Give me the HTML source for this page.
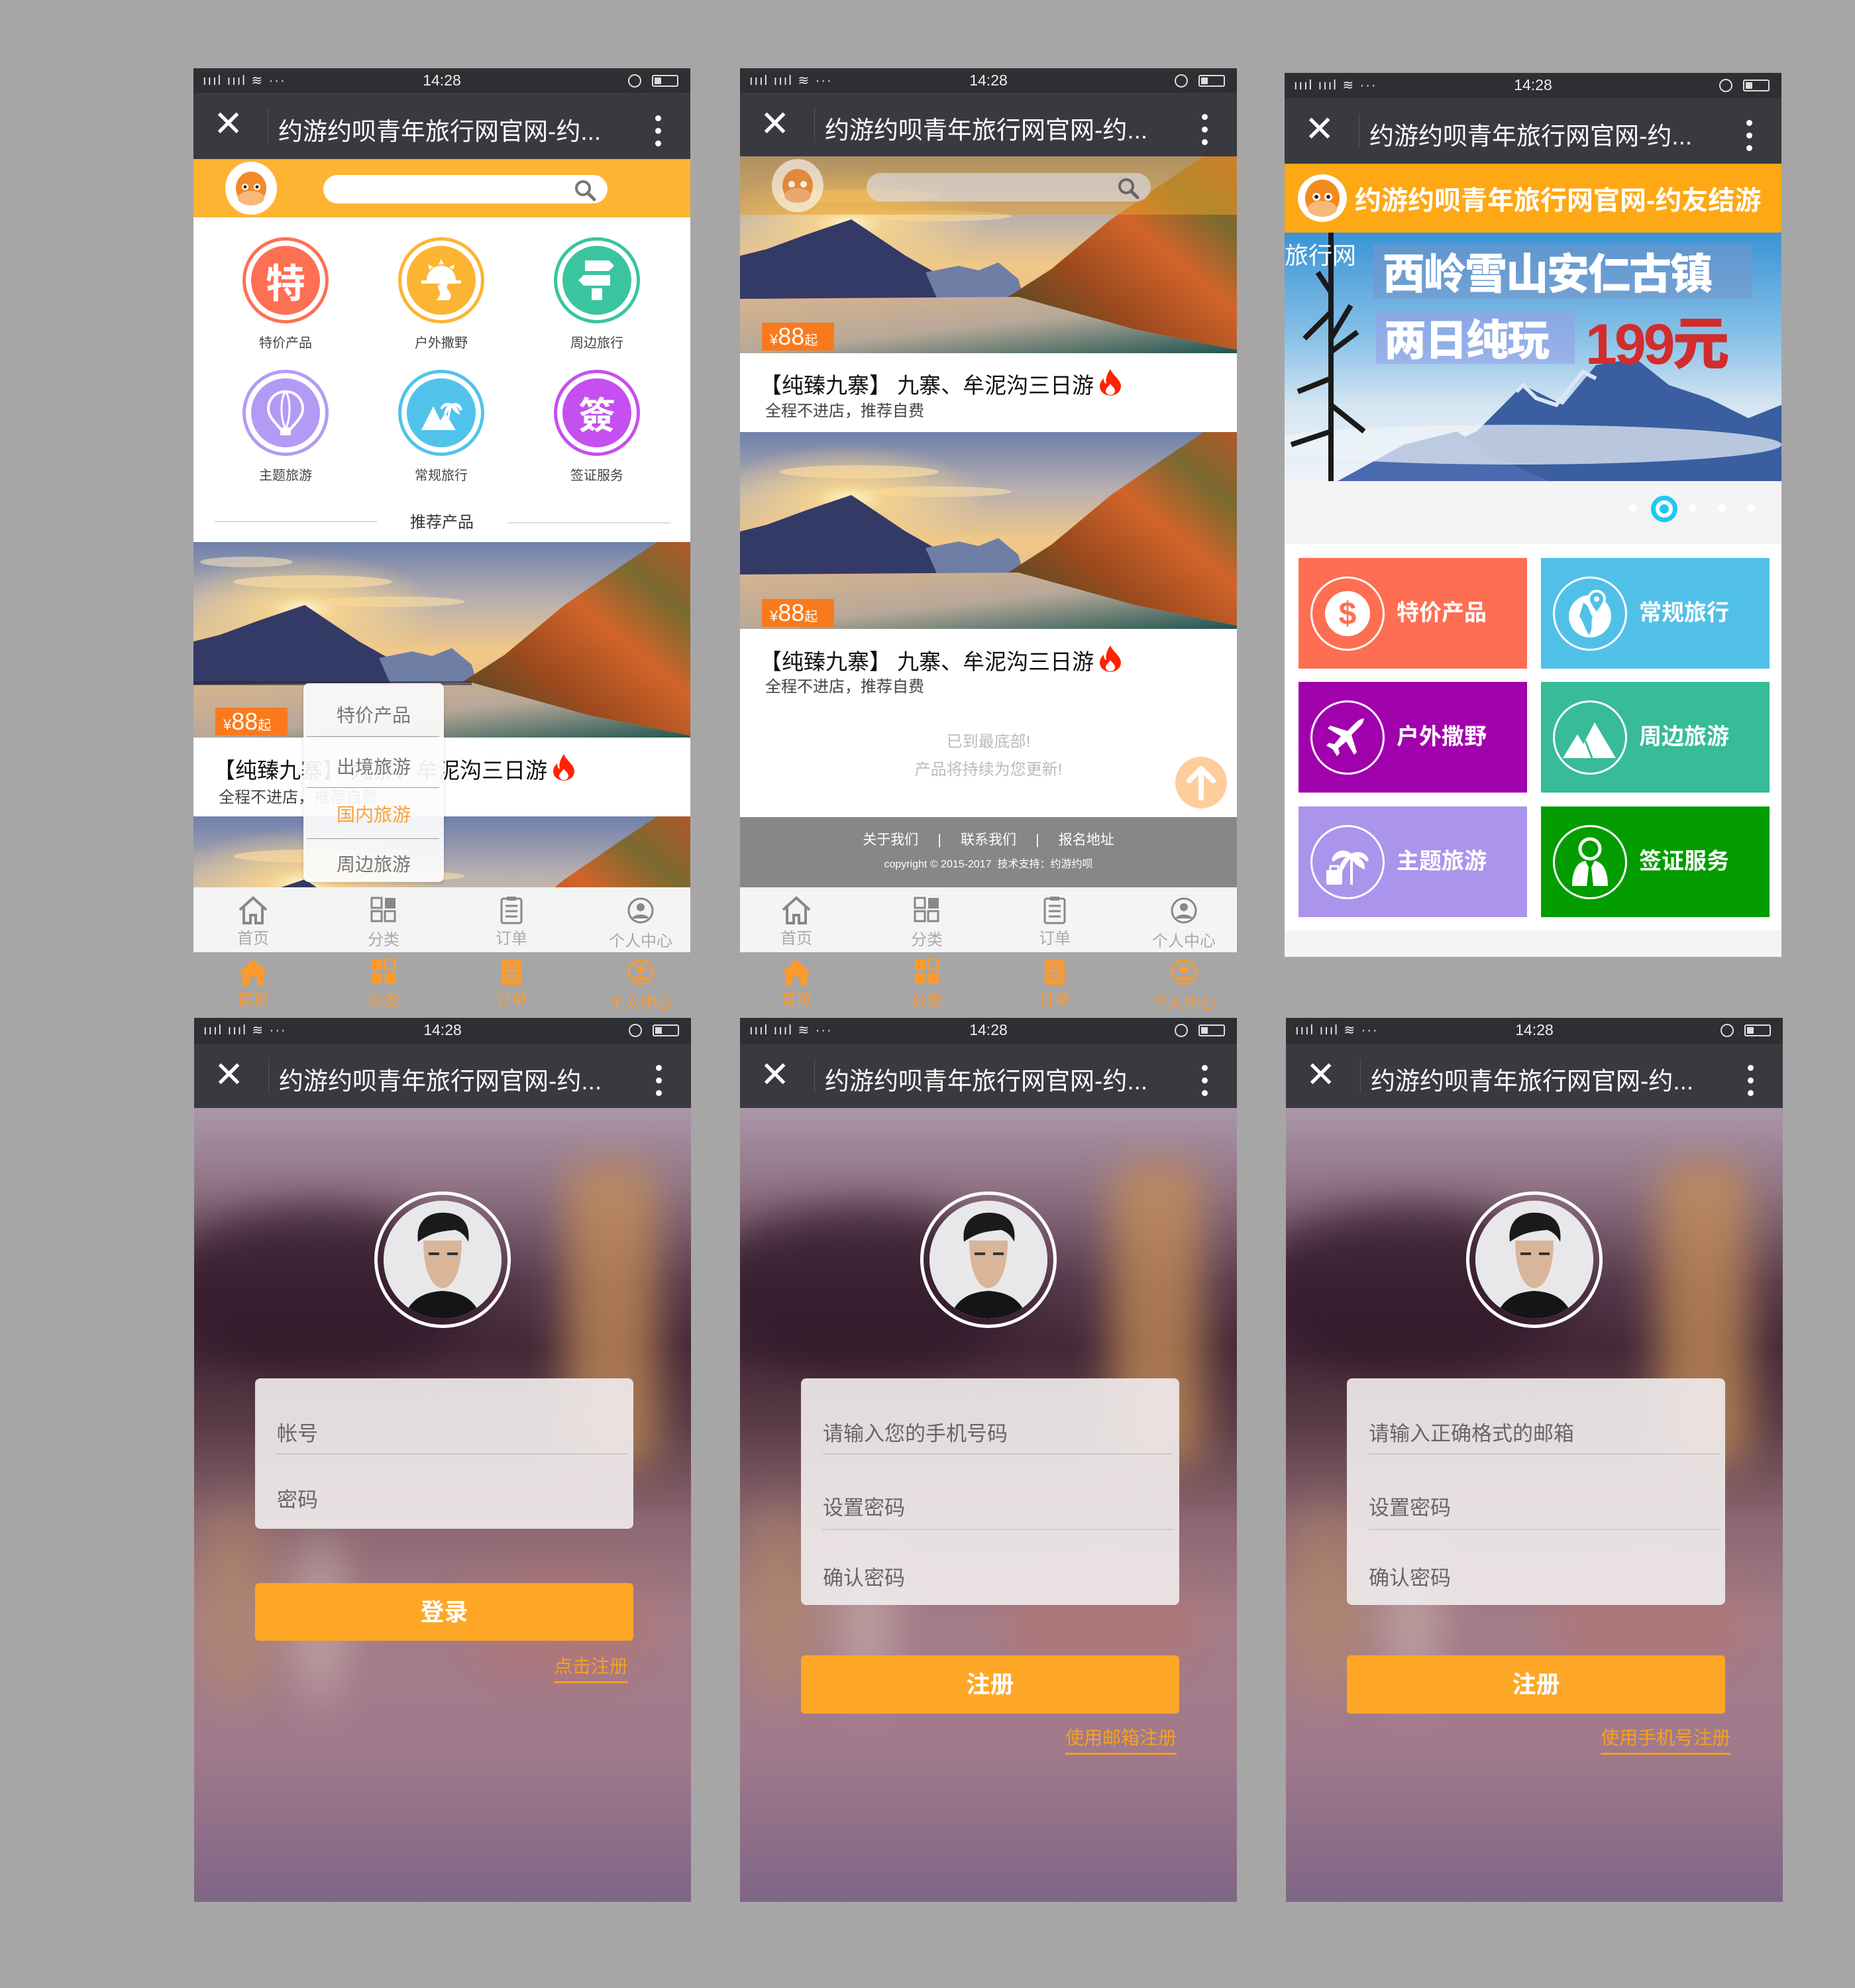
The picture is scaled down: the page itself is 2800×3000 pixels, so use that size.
<!DOCTYPE html>
<html><head><meta charset="utf-8">
<style>
*{margin:0;padding:0;box-sizing:border-box}
body{width:2800px;height:3000px;background:#a6a6a6;position:relative;overflow:hidden;font-family:"Liberation Sans","Noto Sans CJK SC",sans-serif}
.ph{position:absolute;width:750px;overflow:hidden}
.a{position:absolute}
.sb{position:absolute;left:0;top:0;width:750px;background:#2e2f33;color:#eee}
.sb .t{position:absolute;left:0;width:750px;text-align:center;font-size:23px}
.sb .l{position:absolute;left:14px;font-size:20px;letter-spacing:2px}
.sb .bat{position:absolute;right:18px;width:40px;height:18px;border:2px solid #ddd;border-radius:3px}
.sb .bat:after{content:"";position:absolute;left:2px;top:2px;width:10px;height:10px;background:#ddd}
.sb .al{position:absolute;right:74px;width:20px;height:20px;border:2px solid #ddd;border-radius:50%}
.nv{position:absolute;left:0;width:750px;background:#393a3f;color:#fff}
.nv .x{position:absolute;left:30px;font-size:54px;font-weight:300;line-height:1}
.nv .dv{position:absolute;left:112px;width:1px;background:#555}
.nv .tt{position:absolute;left:128px;font-size:37px;white-space:nowrap}
.nv .dots{position:absolute;left:697px;width:8px}
.nv .dots i{display:block;width:9px;height:9px;border-radius:50%;background:#fff;margin-bottom:10px}
.land{position:absolute;left:0;width:750px;overflow:hidden}
.tag{position:absolute;left:33px;background:#f97a1c;color:#fff;height:42px;width:109px;font-size:36px;line-height:42px;padding-left:12px}
.tag small{font-size:22px}
.tag b{font-size:20px;font-weight:normal}
.ct{position:absolute;left:30px;font-size:33px;color:#111;white-space:nowrap}
.ct svg{vertical-align:-4px;margin-left:8px}
.cs{position:absolute;left:38px;font-size:24px;color:#444;white-space:nowrap}
.tabs{position:absolute;left:0;width:750px;height:98px;background:#f4f4f4}
.tab{position:absolute;width:150px;text-align:center}
.tab span{display:block;font-size:24px}
.ci{position:absolute;width:130px;height:130px;border-radius:50%;border:5px solid;padding:8px}
.ci div{width:100%;height:100%;border-radius:50%;display:flex;align-items:center;justify-content:center;color:#fff}
.cl{position:absolute;width:200px;text-align:center;font-size:20px;color:#444}
.tile{position:absolute;width:345px;height:167px}
.tile .r{position:absolute;left:18px;top:28px;width:112px;height:112px;border:3px solid #fff;border-radius:50%;display:flex;align-items:center;justify-content:center}
.tile .n{position:absolute;left:148px;top:0;line-height:167px;color:#fff;font-size:34px;font-weight:bold}
.lg{position:absolute;left:0;top:136px;width:750px;height:1198px;overflow:hidden;
background:linear-gradient(180deg,#ab97aa 0%,#8f7385 10%,#573a4c 22%,#432838 30%,#5a3c46 40%,#8c6670 52%,#a47c88 64%,#a27a8c 80%,#7f6686 100%)}
.lg .bl{position:absolute;border-radius:50%;filter:blur(30px)}
.frm{position:absolute;left:92px;width:571px;background:rgba(238,232,234,.93);border-radius:8px}
.frm .f{position:absolute;left:33px;font-size:31px;color:#666}
.frm .hl{position:absolute;left:32px;width:530px;height:2px;background:#cdcbcd}
.btn{position:absolute;left:92px;width:571px;background:#fea726;border-radius:6px;color:#fff;text-align:center;font-size:36px;font-weight:bold}
.lnk{position:absolute;color:#f6a01f;font-size:28px;border-bottom:3px solid #f6a01f;padding-bottom:4px;white-space:nowrap}
.av{position:absolute;left:272px;top:660px;width:206px;height:206px;border-radius:50%;border:5px solid #fff;padding:9px}
.av div{width:100%;height:100%;border-radius:50%;overflow:hidden;background:#eee}
</style></head><body>

<svg width="0" height="0" style="position:absolute">
<defs>
<linearGradient id="sky" x1="0" y1="0" x2="0" y2="1"><stop offset="0" stop-color="#6f80ab"/><stop offset=".3" stop-color="#b9b0b0"/><stop offset=".55" stop-color="#f0c888"/><stop offset="1" stop-color="#e8b47a"/></linearGradient>
<radialGradient id="sun" cx=".22" cy=".34" r=".28"><stop offset="0" stop-color="#fff8d0"/><stop offset=".25" stop-color="#ffd88a" stop-opacity=".8"/><stop offset="1" stop-color="#ffd88a" stop-opacity="0"/></radialGradient>
<linearGradient id="lake" x1="0" y1="0" x2="1" y2="1"><stop offset="0" stop-color="#d9b48c"/><stop offset=".5" stop-color="#b7a899"/><stop offset="1" stop-color="#1e5550"/></linearGradient>
<linearGradient id="hill" x1="0" y1="1" x2="1" y2="0"><stop offset="0" stop-color="#3a4a28"/><stop offset=".35" stop-color="#9c4a1e"/><stop offset=".6" stop-color="#d2642a"/><stop offset=".8" stop-color="#7a6a30"/><stop offset="1" stop-color="#b0582a"/></linearGradient>
<linearGradient id="snow" x1="0" y1="0" x2="0" y2="1"><stop offset="0" stop-color="#3a94d6"/><stop offset=".45" stop-color="#8ec4e8"/><stop offset=".7" stop-color="#d6e6f2"/><stop offset="1" stop-color="#eef3f8"/></linearGradient>
</defs></svg>

<!-- ============ PHONE 1 ============ -->
<div class="ph" style="left:292px;top:103px;height:1434px">
 <div class="sb" style="height:37px"><span class="l" style="top:6px">ıııl ıııl ≋ ···</span><span class="t" style="top:5px">14:28</span><span class="al" style="top:9px"></span><span class="bat" style="top:10px"></span></div>
 <div class="nv" style="top:37px;height:100px"><span class="x" style="top:20px">✕</span><span class="dv" style="top:24px;height:52px"></span><span class="tt" style="top:28px">约游约呗青年旅行网官网-约...</span><span class="dots" style="top:34px"><i></i><i></i><i></i></span></div>
 <div class="a" style="top:137px;left:0;width:750px;height:88px;background:#fdb433"></div>
 <div class="a" style="left:48px;top:141px;width:78px;height:80px;border-radius:50%;background:#fff"><svg width="78" height="80" viewBox="0 0 78 80"><ellipse cx="39" cy="40" rx="23" ry="25" fill="#f08a2a"/><ellipse cx="39" cy="55" rx="20" ry="11" fill="#f7b97a"/><circle cx="30" cy="38" r="5" fill="#fff"/><circle cx="48" cy="38" r="5" fill="#fff"/><circle cx="30" cy="38" r="2.5" fill="#222"/><circle cx="48" cy="38" r="2.5" fill="#222"/></svg></div>
 <div class="a" style="left:196px;top:161px;width:429px;height:43px;border-radius:22px;background:#fff"><svg class="a" style="left:378px;top:6px" width="34" height="34" viewBox="0 0 34 34"><circle cx="14" cy="14" r="10" fill="none" stroke="#777" stroke-width="4"/><line x1="21" y1="21" x2="31" y2="31" stroke="#777" stroke-width="5" stroke-linecap="round"/></svg></div>
 <div class="a" style="left:0;top:225px;width:750px;height:490px;background:#fff"></div>
 <div class="ci" style="left:74px;top:255px;border-color:#fd7053"><div style="background:#fd7053;font-size:60px;font-weight:bold">特</div></div>
 <div class="ci" style="left:309px;top:255px;border-color:#fdb433"><div style="background:#fdb433"><svg width="80" height="80" viewBox="0 0 80 80"><path d="M18 40a22 22 0 0 1 44 0z" fill="#fff"/><rect x="10" y="40" width="60" height="5" fill="#fff"/><path d="M40 45c-14 5 8 12-8 25h20c10-12-12-18 0-25z" fill="#fff"/><path d="M40 8l4 8h-8zM20 16l8 4-6 4zM60 16l-2 8-6-4z" fill="#fff"/></svg></div></div>
 <div class="ci" style="left:544px;top:255px;border-color:#3bc4a0"><div style="background:#3bc4a0"><svg width="80" height="80" viewBox="0 0 80 80"><rect x="22" y="10" width="36" height="16" fill="#fff"/><path d="M58 10l8 8-8 8z" fill="#fff"/><rect x="20" y="32" width="40" height="16" fill="#fff"/><path d="M20 32l-8 8 8 8z" fill="#fff"/><rect x="32" y="52" width="16" height="18" rx="2" fill="#fff"/></svg></div></div>
 <div class="cl" style="left:39px;top:398px">特价产品</div>
 <div class="cl" style="left:274px;top:398px">户外撒野</div>
 <div class="cl" style="left:509px;top:398px">周边旅行</div>
 <div class="ci" style="left:74px;top:455px;border-color:#b39af5"><div style="background:#b39af5"><svg width="80" height="80" viewBox="0 0 80 80"><path d="M40 8c-16 0-26 12-26 26 0 12 12 22 18 30h16c6-8 18-18 18-30 0-14-10-26-26-26z" fill="none" stroke="#fff" stroke-width="4"/><path d="M40 8c-8 10-8 40 0 56M40 8c8 10 8 40 0 56" fill="none" stroke="#fff" stroke-width="3"/><rect x="32" y="66" width="16" height="8" fill="#fff"/></svg></div></div>
 <div class="ci" style="left:309px;top:455px;border-color:#51c3ea"><div style="background:#51c3ea"><svg width="80" height="80" viewBox="0 0 80 80"><path d="M10 66l18-36 18 36z M30 66l16-26 16 26z" fill="#fff"/><path d="M50 60c0-14 2-24 6-32M56 28c-8-4-14 0-16 6 4-6 10-6 16-6 -6 2-10 8-10 14 4-8 8-12 10-14 2 6 6 10 10 12-2-6-6-10-10-12 8 0 12 4 14 8 0-6-6-12-14-8z" fill="#fff" stroke="#fff" stroke-width="3"/></svg></div></div>
 <div class="ci" style="left:544px;top:455px;border-color:#c64ff0"><div style="background:#c64ff0;font-size:56px;font-weight:bold">簽</div></div>
 <div class="cl" style="left:39px;top:598px">主题旅游</div>
 <div class="cl" style="left:274px;top:598px">常规旅行</div>
 <div class="cl" style="left:509px;top:598px">签证服务</div>
 <div class="a" style="left:32px;top:683px;width:245px;height:2px;background:#ddd"></div>
 <div class="a" style="left:475px;top:685px;width:245px;height:2px;background:#ddd"></div>
 <div class="a" style="left:0;width:750px;text-align:center;top:665px;font-size:24px;color:#333">推荐产品</div>
 <div class="land" style="top:715px;height:295px"><svg width="750" height="297" viewBox="0 0 750 297" preserveAspectRatio="none"><rect width="750" height="297" fill="url(#sky)"/><ellipse cx="180" cy="60" rx="120" ry="10" fill="#f4dcb0" opacity=".7"/><ellipse cx="300" cy="90" rx="110" ry="8" fill="#f0d8a8" opacity=".7"/><ellipse cx="80" cy="30" rx="70" ry="8" fill="#f4e0c0" opacity=".6"/><rect width="750" height="297" fill="url(#sun)"/><path d="M0 150L40 140 100 118 168 95 250 150 330 195 420 215 0 220z" fill="#343a66"/><path d="M280 175L330 165 360 172 390 160 420 185 430 220 300 220z" fill="#6f7ea4"/><path d="M750 0L700 0 640 40 560 95 470 170 400 215 430 228 600 262 750 292z" fill="url(#hill)"/><path d="M0 215L420 212 600 262 750 292 750 297 0 297z" fill="url(#lake)"/><path d="M0 213h420" stroke="#2a2a3a" stroke-width="6" opacity=".6"/></svg></div>
 <div class="tag" style="top:965px"><small>¥</small>88<b>起</b></div>
 <div class="a" style="left:0;top:1010px;width:750px;height:119px;background:#fff"></div>
 <div class="ct" style="top:1033px">【纯臻九寨】 九寨、牟泥沟三日游<svg width="34" height="40" viewBox="0 0 34 40"><path d="M17 0c4 10 16 16 16 26a16 14 0 0 1-32 0c0-6 4-10 6-12 0 6 2 8 4 8-2-8 2-16 6-22z" fill="#f20"/><path d="M17 22c2 4 7 6 7 11a7 6 0 0 1-14 0c0-4 4-6 7-11z" fill="#fff"/></svg></div>
 <div class="cs" style="top:1080px">全程不进店，推荐自费</div>
 <div class="land" style="top:1129px;height:107px"><svg width="750" height="297" viewBox="0 0 750 297" preserveAspectRatio="none"><rect width="750" height="297" fill="url(#sky)"/><ellipse cx="180" cy="60" rx="120" ry="10" fill="#f4dcb0" opacity=".7"/><ellipse cx="300" cy="90" rx="110" ry="8" fill="#f0d8a8" opacity=".7"/><rect width="750" height="297" fill="url(#sun)"/><path d="M0 150L40 140 100 118 168 95 250 150 330 195 420 215 0 220z" fill="#343a66"/><path d="M750 0L700 0 640 40 560 95 470 170 400 215 430 228 600 262 750 292z" fill="url(#hill)"/></svg></div>
 <div class="a" style="left:166px;top:928px;width:212px;height:300px;background:rgba(252,252,252,.93);border-radius:8px;box-shadow:0 2px 6px rgba(0,0,0,.15)"></div>
 <div class="a" style="left:171px;top:1008px;width:200px;height:1px;background:#999"></div>
 <div class="a" style="left:171px;top:1085px;width:200px;height:1px;background:#999"></div>
 <div class="a" style="left:171px;top:1162px;width:200px;height:1px;background:#999"></div>
 <div class="a" style="left:166px;width:212px;text-align:center;top:955px;font-size:28px;color:#777">特价产品</div>
 <div class="a" style="left:166px;width:212px;text-align:center;top:1033px;font-size:28px;color:#777">出境旅游</div>
 <div class="a" style="left:166px;width:212px;text-align:center;top:1105px;font-size:28px;color:#f9a23c">国内旅游</div>
 <div class="a" style="left:166px;width:212px;text-align:center;top:1180px;font-size:28px;color:#777">周边旅游</div>
 <div class="tabs" style="top:1236px"></div>
 <div class="tab" style="left:15px;top:1248px"><svg width="48" height="46" viewBox="0 0 48 46"><path d="M4 22L24 4 44 22M10 18v24h10V30h8v12h10V18" fill="none" stroke="#888" stroke-width="4"/></svg><span style="color:#aaa;margin-top:-6px">首页</span></div>
 <div class="tab" style="left:212px;top:1250px"><svg width="40" height="40" viewBox="0 0 40 40"><rect x="2" y="2" width="15" height="15" fill="none" stroke="#888" stroke-width="3"/><rect x="22" y="2" width="16" height="16" fill="#888"/><rect x="2" y="22" width="15" height="15" fill="none" stroke="#888" stroke-width="3"/><rect x="22" y="22" width="15" height="15" fill="none" stroke="#888" stroke-width="3"/></svg><span style="color:#aaa">分类</span></div>
 <div class="tab" style="left:405px;top:1248px"><svg width="34" height="44" viewBox="0 0 34 44"><rect x="2" y="5" width="30" height="37" rx="3" fill="none" stroke="#888" stroke-width="3"/><rect x="10" y="2" width="14" height="6" fill="#888"/><path d="M8 16h18M8 24h18M8 32h18" stroke="#888" stroke-width="3"/></svg><span style="color:#aaa;margin-top:-4px">订单</span></div>
 <div class="tab" style="left:600px;top:1250px"><svg width="42" height="42" viewBox="0 0 42 42"><circle cx="21" cy="21" r="18" fill="none" stroke="#888" stroke-width="3"/><circle cx="21" cy="16" r="6" fill="#888"/><path d="M8 33c4-8 22-8 26 0" fill="#888"/></svg><span style="color:#aaa">个人中心</span></div>
 <div class="tab" style="left:15px;top:1341px"><svg width="48" height="46" viewBox="0 0 48 46"><path d="M2 24L24 4 46 24h-6v20H30V30h-12v14H8V24z" fill="#fd9a2e"/></svg><span style="color:#fd9a2e;margin-top:-6px">首页</span></div>
 <div class="tab" style="left:212px;top:1343px"><svg width="40" height="40" viewBox="0 0 40 40"><rect x="2" y="2" width="16" height="16" fill="#fd9a2e"/><rect x="22" y="2" width="15" height="15" fill="none" stroke="#fd9a2e" stroke-width="3"/><rect x="2" y="22" width="16" height="16" fill="#fd9a2e"/><rect x="22" y="22" width="16" height="16" fill="#fd9a2e"/></svg><span style="color:#fd9a2e">分类</span></div>
 <div class="tab" style="left:405px;top:1341px"><svg width="34" height="44" viewBox="0 0 34 44"><rect x="2" y="5" width="30" height="37" rx="3" fill="#fd9a2e"/><path d="M8 16h18M8 24h18M8 32h18" stroke="#a6a6a6" stroke-width="3"/></svg><span style="color:#fd9a2e;margin-top:-4px">订单</span></div>
 <div class="tab" style="left:600px;top:1343px"><svg width="42" height="42" viewBox="0 0 42 42"><circle cx="21" cy="21" r="18" fill="none" stroke="#fd9a2e" stroke-width="3"/><circle cx="21" cy="16" r="6" fill="#fd9a2e"/><path d="M8 33c4-8 22-8 26 0" fill="#fd9a2e"/></svg><span style="color:#fd9a2e">个人中心</span></div>
</div>

<!-- ============ PHONE 2 ============ -->
<div class="ph" style="left:1117px;top:103px;height:1434px">
 <div class="sb" style="height:37px"><span class="l" style="top:6px">ıııl ıııl ≋ ···</span><span class="t" style="top:5px">14:28</span><span class="al" style="top:9px"></span><span class="bat" style="top:10px"></span></div>
 <div class="nv" style="top:37px;height:96px"><span class="x" style="top:20px">✕</span><span class="dv" style="top:22px;height:52px"></span><span class="tt" style="top:26px">约游约呗青年旅行网官网-约...</span><span class="dots" style="top:32px"><i></i><i></i><i></i></span></div>
 <div class="land" style="top:133px;height:297px"><svg width="750" height="297" viewBox="0 0 750 297" preserveAspectRatio="none"><rect width="750" height="297" fill="url(#sky)"/><ellipse cx="180" cy="60" rx="120" ry="10" fill="#f4dcb0" opacity=".7"/><ellipse cx="300" cy="90" rx="110" ry="8" fill="#f0d8a8" opacity=".7"/><rect width="750" height="297" fill="url(#sun)"/><path d="M0 150L40 140 100 118 168 95 250 150 330 195 420 215 0 220z" fill="#343a66"/><path d="M280 175L330 165 360 172 390 160 420 185 430 220 300 220z" fill="#6f7ea4"/><path d="M750 0L700 0 640 40 560 95 470 170 400 215 430 228 600 262 750 292z" fill="url(#hill)"/><path d="M0 215L420 212 600 262 750 292 750 297 0 297z" fill="url(#lake)"/></svg></div>
 <div class="a" style="left:0;top:133px;width:750px;height:88px;background:rgba(232,160,40,.55)"></div>
 <div class="a" style="left:48px;top:137px;width:78px;height:80px;border-radius:50%;background:rgba(255,255,255,.6)"><svg width="78" height="80" viewBox="0 0 78 80"><ellipse cx="39" cy="40" rx="23" ry="25" fill="#e08a3a"/><ellipse cx="39" cy="55" rx="20" ry="11" fill="#e8a870"/><circle cx="30" cy="38" r="5" fill="#eee"/><circle cx="48" cy="38" r="5" fill="#eee"/></svg></div>
 <div class="a" style="left:191px;top:158px;width:429px;height:43px;border-radius:22px;background:rgba(220,225,240,.6)"><svg class="a" style="left:378px;top:6px" width="34" height="34" viewBox="0 0 34 34"><circle cx="14" cy="14" r="10" fill="none" stroke="#666" stroke-width="4"/><line x1="21" y1="21" x2="31" y2="31" stroke="#666" stroke-width="5" stroke-linecap="round"/></svg></div>
 <div class="tag" style="top:384px"><small>¥</small>88<b>起</b></div>
 <div class="a" style="left:0;top:430px;width:750px;height:119px;background:#fff"></div>
 <div class="ct" style="top:452px">【纯臻九寨】 九寨、牟泥沟三日游<svg width="34" height="40" viewBox="0 0 34 40"><path d="M17 0c4 10 16 16 16 26a16 14 0 0 1-32 0c0-6 4-10 6-12 0 6 2 8 4 8-2-8 2-16 6-22z" fill="#f20"/><path d="M17 22c2 4 7 6 7 11a7 6 0 0 1-14 0c0-4 4-6 7-11z" fill="#fff"/></svg></div>
 <div class="cs" style="top:497px">全程不进店，推荐自费</div>
 <div class="land" style="top:549px;height:297px"><svg width="750" height="297" viewBox="0 0 750 297" preserveAspectRatio="none"><rect width="750" height="297" fill="url(#sky)"/><ellipse cx="180" cy="60" rx="120" ry="10" fill="#f4dcb0" opacity=".7"/><ellipse cx="300" cy="90" rx="110" ry="8" fill="#f0d8a8" opacity=".7"/><rect width="750" height="297" fill="url(#sun)"/><path d="M0 150L40 140 100 118 168 95 250 150 330 195 420 215 0 220z" fill="#343a66"/><path d="M280 175L330 165 360 172 390 160 420 185 430 220 300 220z" fill="#6f7ea4"/><path d="M750 0L700 0 640 40 560 95 470 170 400 215 430 228 600 262 750 292z" fill="url(#hill)"/><path d="M0 215L420 212 600 262 750 292 750 297 0 297z" fill="url(#lake)"/></svg></div>
 <div class="tag" style="top:801px"><small>¥</small>88<b>起</b></div>
 <div class="a" style="left:0;top:846px;width:750px;height:284px;background:#fff"></div>
 <div class="ct" style="top:869px">【纯臻九寨】 九寨、牟泥沟三日游<svg width="34" height="40" viewBox="0 0 34 40"><path d="M17 0c4 10 16 16 16 26a16 14 0 0 1-32 0c0-6 4-10 6-12 0 6 2 8 4 8-2-8 2-16 6-22z" fill="#f20"/><path d="M17 22c2 4 7 6 7 11a7 6 0 0 1-14 0c0-4 4-6 7-11z" fill="#fff"/></svg></div>
 <div class="cs" style="top:913px">全程不进店，推荐自费</div>
 <div class="a" style="left:0;width:750px;text-align:center;top:996px;font-size:24px;color:#bbb">已到最底部!</div>
 <div class="a" style="left:0;width:750px;text-align:center;top:1038px;font-size:24px;color:#bbb">产品将持续为您更新!</div>
 <div class="a" style="left:657px;top:1039px;width:78px;height:78px;border-radius:50%;background:#ffcd9b"><svg width="78" height="78" viewBox="0 0 78 78"><path d="M39 62V18M21 36l18-18 18 18" fill="none" stroke="#fff" stroke-width="8" stroke-linecap="round" stroke-linejoin="round"/></svg></div>
 <div class="a" style="left:0;top:1130px;width:750px;height:106px;background:#878787"></div>
 <div class="a" style="left:0;width:750px;text-align:center;top:1148px;font-size:21px;color:#fff">关于我们&nbsp;&nbsp;&nbsp;&nbsp;&nbsp;|&nbsp;&nbsp;&nbsp;&nbsp;&nbsp;联系我们&nbsp;&nbsp;&nbsp;&nbsp;&nbsp;|&nbsp;&nbsp;&nbsp;&nbsp;&nbsp;报名地址</div>
 <div class="a" style="left:0;width:750px;text-align:center;top:1187px;font-size:16px;color:#fff">copyright © 2015-2017&nbsp; 技术支持：约游约呗</div>
 <div class="tabs" style="top:1236px"></div>
 <div class="tab" style="left:10px;top:1248px"><svg width="48" height="46" viewBox="0 0 48 46"><path d="M4 22L24 4 44 22M10 18v24h10V30h8v12h10V18" fill="none" stroke="#888" stroke-width="4"/></svg><span style="color:#aaa;margin-top:-6px">首页</span></div>
 <div class="tab" style="left:207px;top:1250px"><svg width="40" height="40" viewBox="0 0 40 40"><rect x="2" y="2" width="15" height="15" fill="none" stroke="#888" stroke-width="3"/><rect x="22" y="2" width="16" height="16" fill="#888"/><rect x="2" y="22" width="15" height="15" fill="none" stroke="#888" stroke-width="3"/><rect x="22" y="22" width="15" height="15" fill="none" stroke="#888" stroke-width="3"/></svg><span style="color:#aaa">分类</span></div>
 <div class="tab" style="left:400px;top:1248px"><svg width="34" height="44" viewBox="0 0 34 44"><rect x="2" y="5" width="30" height="37" rx="3" fill="none" stroke="#888" stroke-width="3"/><rect x="10" y="2" width="14" height="6" fill="#888"/><path d="M8 16h18M8 24h18M8 32h18" stroke="#888" stroke-width="3"/></svg><span style="color:#aaa;margin-top:-4px">订单</span></div>
 <div class="tab" style="left:595px;top:1250px"><svg width="42" height="42" viewBox="0 0 42 42"><circle cx="21" cy="21" r="18" fill="none" stroke="#888" stroke-width="3"/><circle cx="21" cy="16" r="6" fill="#888"/><path d="M8 33c4-8 22-8 26 0" fill="#888"/></svg><span style="color:#aaa">个人中心</span></div>
 <div class="tab" style="left:10px;top:1341px"><svg width="48" height="46" viewBox="0 0 48 46"><path d="M2 24L24 4 46 24h-6v20H30V30h-12v14H8V24z" fill="#fd9a2e"/></svg><span style="color:#fd9a2e;margin-top:-6px">首页</span></div>
 <div class="tab" style="left:207px;top:1343px"><svg width="40" height="40" viewBox="0 0 40 40"><rect x="2" y="2" width="16" height="16" fill="#fd9a2e"/><rect x="22" y="2" width="15" height="15" fill="none" stroke="#fd9a2e" stroke-width="3"/><rect x="2" y="22" width="16" height="16" fill="#fd9a2e"/><rect x="22" y="22" width="16" height="16" fill="#fd9a2e"/></svg><span style="color:#fd9a2e">分类</span></div>
 <div class="tab" style="left:400px;top:1341px"><svg width="34" height="44" viewBox="0 0 34 44"><rect x="2" y="5" width="30" height="37" rx="3" fill="#fd9a2e"/><path d="M8 16h18M8 24h18M8 32h18" stroke="#a6a6a6" stroke-width="3"/></svg><span style="color:#fd9a2e;margin-top:-4px">订单</span></div>
 <div class="tab" style="left:595px;top:1343px"><svg width="42" height="42" viewBox="0 0 42 42"><circle cx="21" cy="21" r="18" fill="none" stroke="#fd9a2e" stroke-width="3"/><circle cx="21" cy="16" r="6" fill="#fd9a2e"/><path d="M8 33c4-8 22-8 26 0" fill="#fd9a2e"/></svg><span style="color:#fd9a2e">个人中心</span></div>
</div>

<!-- ============ PHONE 3 ============ -->
<div class="ph" style="left:1939px;top:110px;height:1334px;background:#f4f4f4">
 <div class="sb" style="height:38px"><span class="l" style="top:6px">ıııl ıııl ≋ ···</span><span class="t" style="top:5px">14:28</span><span class="al" style="top:9px"></span><span class="bat" style="top:10px"></span></div>
 <div class="nv" style="top:38px;height:99px"><span class="x" style="top:20px">✕</span><span class="dv" style="top:24px;height:52px"></span><span class="tt" style="top:27px">约游约呗青年旅行网官网-约...</span><span class="dots" style="top:33px"><i></i><i></i><i></i></span></div>
 <div class="a" style="top:137px;left:0;width:750px;height:104px;background:#fea815"></div>
 <div class="a" style="left:20px;top:153px;width:74px;height:72px;border-radius:50%;background:#fff"><svg width="74" height="72" viewBox="0 0 74 72"><ellipse cx="37" cy="36" rx="26" ry="28" fill="#f28a1e"/><ellipse cx="37" cy="52" rx="22" ry="12" fill="#f7b97a"/><circle cx="28" cy="34" r="6" fill="#fff"/><circle cx="46" cy="34" r="6" fill="#fff"/><circle cx="28" cy="34" r="3" fill="#222"/><circle cx="46" cy="34" r="3" fill="#222"/></svg></div>
 <div class="a" style="left:106px;top:160px;font-size:40px;font-weight:bold;color:#fff;white-space:nowrap">约游约呗青年旅行网官网-约友结游</div>
 <div class="a" style="left:0;top:241px;width:750px;height:375px;overflow:hidden">
  <svg width="750" height="375" viewBox="0 0 750 375"><rect width="750" height="375" fill="url(#snow)"/><path d="M200 340L290 300 360 230 420 260 470 200 530 190 580 230 640 250 700 280 750 260 750 375 200 375z" fill="#3a5ea0"/><path d="M350 240l10-10 20 20 30 10 40-50 20 10" fill="none" stroke="#dbe6f4" stroke-width="6"/><path d="M80 375L180 320 260 300 320 340 400 375z" fill="#4a6ab0"/><path d="M620 340L700 300 750 290 750 375 600 375z" fill="#3a5ea0"/><ellipse cx="350" cy="320" rx="400" ry="30" fill="#eef3f8" opacity=".7"/><path d="M70 0v375M70 120l-40 40M70 180l40-30M70 220l-50 20M70 260l50 40M70 300l-60 20M70 160l30-50M70 90l-20-30" stroke="#1a1a1a" stroke-width="8" fill="none"/></svg>
  <div class="a" style="left:0;top:6px;font-size:36px;color:#fff">旅行网</div>
  <div class="a" style="left:134px;top:18px;width:572px;height:82px;background:rgba(120,150,200,.55)"></div>
  <div class="a" style="left:148px;top:12px;font-size:64px;font-weight:900;color:#fff;letter-spacing:-2px">西岭雪山安仁古镇</div>
  <div class="a" style="left:138px;top:118px;width:300px;height:80px;background:rgba(150,160,230,.6)"></div>
  <div class="a" style="left:150px;top:112px;font-size:64px;font-weight:900;color:#fff;letter-spacing:-2px">两日纯玩</div>
  <div class="a" style="left:454px;top:98px;font-size:86px;font-weight:900;color:#d22c2c;letter-spacing:-4px">199元</div>
 </div>
 <div class="a" style="left:520px;top:651px;width:12px;height:12px;border-radius:50%;background:#fff"></div>
 <div class="a" style="left:553px;top:638px;width:40px;height:40px;border-radius:50%;border:7px solid #1ec8f4;background:#fff"><div style="margin:6px;width:14px;height:14px;border-radius:50%;background:#1ec8f4"></div></div>
 <div class="a" style="left:610px;top:651px;width:12px;height:12px;border-radius:50%;background:#fff"></div>
 <div class="a" style="left:654px;top:651px;width:12px;height:12px;border-radius:50%;background:#fff"></div>
 <div class="a" style="left:698px;top:651px;width:12px;height:12px;border-radius:50%;background:#fff"></div>
 <div class="a" style="left:0;top:711px;width:750px;height:583px;background:#fff"></div>
 <div class="tile" style="left:21px;top:732px;background:#fe6e52"><div class="r"><svg width="72" height="72" viewBox="0 0 72 72"><circle cx="36" cy="36" r="34" fill="#fff"/><text x="36" y="52" text-anchor="middle" font-size="48" font-weight="bold" fill="#fe6e52" font-family="Liberation Sans">$</text></svg></div><div class="n">特价产品</div></div>
 <div class="tile" style="left:387px;top:732px;background:#51c0e8"><div class="r"><svg width="80" height="80" viewBox="0 0 80 80"><circle cx="40" cy="44" r="32" fill="#fff"/><path d="M30 24c10 4 8 14 14 20-4 8 2 20-6 28-6-10-8-20-14-28z" fill="#51c0e8"/><path d="M50 6a12 12 0 0 1 12 12c0 8-12 22-12 22S38 26 38 18A12 12 0 0 1 50 6z" fill="#51c0e8" stroke="#fff" stroke-width="4"/><circle cx="50" cy="18" r="4" fill="#fff"/></svg></div><div class="n">常规旅行</div></div>
 <div class="tile" style="left:21px;top:919px;background:#a100ad"><div class="r"><svg width="72" height="72" viewBox="0 0 72 72"><path d="M62 8c-4-2-10 2-14 6L36 26 10 18l-4 4 20 12-10 12-8-2-4 4 10 6 6 10 4-4-2-8 12-10 12 20 4-4-8-26 12-12c4-4 8-10 6-14z" fill="#fff"/></svg></div><div class="n">户外撒野</div></div>
 <div class="tile" style="left:387px;top:919px;background:#37bb99"><div class="r"><svg width="86" height="70" viewBox="0 0 86 70"><path d="M2 66l22-36 22 36zM22 66L50 12l32 54z" fill="#fff"/><path d="M36 40l10 26" stroke="#37bb99" stroke-width="3"/></svg></div><div class="n">周边旅游</div></div>
 <div class="tile" style="left:21px;top:1107px;background:#ab94ec"><div class="r"><svg width="76" height="80" viewBox="0 0 76 80"><path d="M44 74V30M44 30c-10-10-26-6-28 8 6-8 18-8 28-8-8 2-18 14-16 24 4-10 10-18 16-24 4 10 10 14 18 18 0-8-8-16-18-18 10-2 20 2 24 8-2-12-18-14-24-8z" fill="#fff" stroke="#fff" stroke-width="4"/><rect x="6" y="52" width="24" height="22" rx="2" fill="#fff"/><rect x="12" y="46" width="12" height="8" fill="none" stroke="#fff" stroke-width="3"/></svg></div><div class="n">主题旅游</div></div>
 <div class="tile" style="left:387px;top:1107px;background:#039d00"><div class="r"><svg width="70" height="80" viewBox="0 0 70 80"><circle cx="35" cy="20" r="15" fill="none" stroke="#fff" stroke-width="5"/><path d="M8 76c0-24 8-36 20-38l5 10-3 28zM62 76c0-24-8-36-20-38l-5 10 3 28z" fill="#fff"/></svg></div><div class="n">签证服务</div></div>
</div>

<!-- ============ LOGIN PHONES ============ -->
<div class="ph" style="left:293px;top:1536px;height:1334px">
 <div class="lg">
  <div class="bl" style="left:-60px;top:150px;width:500px;height:250px;background:#2e1626;opacity:.7"></div>
  <div class="bl" style="left:560px;top:80px;width:140px;height:460px;background:#c89058;opacity:.75;border-radius:40px"></div>
  <div class="bl" style="left:0;top:600px;width:120px;height:300px;background:#b89060;opacity:.5"></div>
  <div class="bl" style="left:150px;top:640px;width:80px;height:260px;background:#e0d0c0;opacity:.4"></div>
  <div class="bl" style="left:400px;top:700px;width:300px;height:160px;background:#c07060;opacity:.35"></div>
 </div>
 <div class="sb" style="height:39px"><span class="l" style="top:6px">ıııl ıııl ≋ ···</span><span class="t" style="top:5px">14:28</span><span class="al" style="top:9px"></span><span class="bat" style="top:10px"></span></div>
 <div class="nv" style="top:39px;height:97px"><span class="x" style="top:20px">✕</span><span class="dv" style="top:22px;height:52px"></span><span class="tt" style="top:26px">约游约呗青年旅行网官网-约...</span><span class="dots" style="top:32px"><i></i><i></i><i></i></span></div>
 <div class="av" style="top:262px"><div><svg width="178" height="178" viewBox="0 0 178 178"><rect width="178" height="178" fill="#e8e8ea"/><path d="M30 178c10-30 30-40 59-42 29 2 49 12 59 42z" fill="#151515"/><path d="M60 60c0 40 10 70 29 72 19-2 29-32 29-72z" fill="#d9b59a"/><path d="M52 62c-4-30 14-44 37-44s43 10 39 44c-6-12-14-16-20-18-16 2-34 2-56 18z" fill="#1a1a1a"/><path d="M68 80h16M96 80h16" stroke="#333" stroke-width="4"/></svg></div></div>
 <div class="frm" style="top:544px;height:227px"><div class="f" style="top:58px">帐号</div><div class="hl" style="top:113px"></div><div class="f" style="top:158px">密码</div></div>
 <div class="btn" style="top:853px;height:87px;line-height:87px">登录</div>
 <div class="lnk" style="left:543px;top:957px">点击注册</div>
</div>

<div class="ph" style="left:1117px;top:1536px;height:1334px">
 <div class="lg">
  <div class="bl" style="left:-60px;top:150px;width:500px;height:250px;background:#2e1626;opacity:.7"></div>
  <div class="bl" style="left:560px;top:80px;width:140px;height:460px;background:#c89058;opacity:.75;border-radius:40px"></div>
  <div class="bl" style="left:0;top:600px;width:120px;height:300px;background:#b89060;opacity:.5"></div>
  <div class="bl" style="left:150px;top:640px;width:80px;height:260px;background:#e0d0c0;opacity:.4"></div>
  <div class="bl" style="left:400px;top:700px;width:300px;height:160px;background:#c07060;opacity:.35"></div>
 </div>
 <div class="sb" style="height:39px"><span class="l" style="top:6px">ıııl ıııl ≋ ···</span><span class="t" style="top:5px">14:28</span><span class="al" style="top:9px"></span><span class="bat" style="top:10px"></span></div>
 <div class="nv" style="top:39px;height:97px"><span class="x" style="top:20px">✕</span><span class="dv" style="top:22px;height:52px"></span><span class="tt" style="top:26px">约游约呗青年旅行网官网-约...</span><span class="dots" style="top:32px"><i></i><i></i><i></i></span></div>
 <div class="av" style="top:262px"><div><svg width="178" height="178" viewBox="0 0 178 178"><rect width="178" height="178" fill="#e8e8ea"/><path d="M30 178c10-30 30-40 59-42 29 2 49 12 59 42z" fill="#151515"/><path d="M60 60c0 40 10 70 29 72 19-2 29-32 29-72z" fill="#d9b59a"/><path d="M52 62c-4-30 14-44 37-44s43 10 39 44c-6-12-14-16-20-18-16 2-34 2-56 18z" fill="#1a1a1a"/><path d="M68 80h16M96 80h16" stroke="#333" stroke-width="4"/></svg></div></div>
 <div class="frm" style="top:544px;height:342px"><div class="f" style="top:58px">请输入您的手机号码</div><div class="hl" style="top:113px"></div><div class="f" style="top:170px">设置密码</div><div class="hl" style="top:227px"></div><div class="f" style="top:276px">确认密码</div></div>
 <div class="btn" style="top:962px;height:88px;line-height:88px">注册</div>
 <div class="lnk" style="left:491px;top:1065px">使用邮箱注册</div>
</div>

<div class="ph" style="left:1941px;top:1536px;height:1334px">
 <div class="lg">
  <div class="bl" style="left:-60px;top:150px;width:500px;height:250px;background:#2e1626;opacity:.7"></div>
  <div class="bl" style="left:560px;top:80px;width:140px;height:460px;background:#c89058;opacity:.75;border-radius:40px"></div>
  <div class="bl" style="left:0;top:600px;width:120px;height:300px;background:#b89060;opacity:.5"></div>
  <div class="bl" style="left:150px;top:640px;width:80px;height:260px;background:#e0d0c0;opacity:.4"></div>
  <div class="bl" style="left:400px;top:700px;width:300px;height:160px;background:#c07060;opacity:.35"></div>
 </div>
 <div class="sb" style="height:39px"><span class="l" style="top:6px">ıııl ıııl ≋ ···</span><span class="t" style="top:5px">14:28</span><span class="al" style="top:9px"></span><span class="bat" style="top:10px"></span></div>
 <div class="nv" style="top:39px;height:97px"><span class="x" style="top:20px">✕</span><span class="dv" style="top:22px;height:52px"></span><span class="tt" style="top:26px">约游约呗青年旅行网官网-约...</span><span class="dots" style="top:32px"><i></i><i></i><i></i></span></div>
 <div class="av" style="top:262px"><div><svg width="178" height="178" viewBox="0 0 178 178"><rect width="178" height="178" fill="#e8e8ea"/><path d="M30 178c10-30 30-40 59-42 29 2 49 12 59 42z" fill="#151515"/><path d="M60 60c0 40 10 70 29 72 19-2 29-32 29-72z" fill="#d9b59a"/><path d="M52 62c-4-30 14-44 37-44s43 10 39 44c-6-12-14-16-20-18-16 2-34 2-56 18z" fill="#1a1a1a"/><path d="M68 80h16M96 80h16" stroke="#333" stroke-width="4"/></svg></div></div>
 <div class="frm" style="top:544px;height:342px"><div class="f" style="top:58px">请输入正确格式的邮箱</div><div class="hl" style="top:113px"></div><div class="f" style="top:170px">设置密码</div><div class="hl" style="top:227px"></div><div class="f" style="top:276px">确认密码</div></div>
 <div class="btn" style="top:962px;height:88px;line-height:88px">注册</div>
 <div class="lnk" style="left:475px;top:1065px">使用手机号注册</div>
</div>

</body></html>
